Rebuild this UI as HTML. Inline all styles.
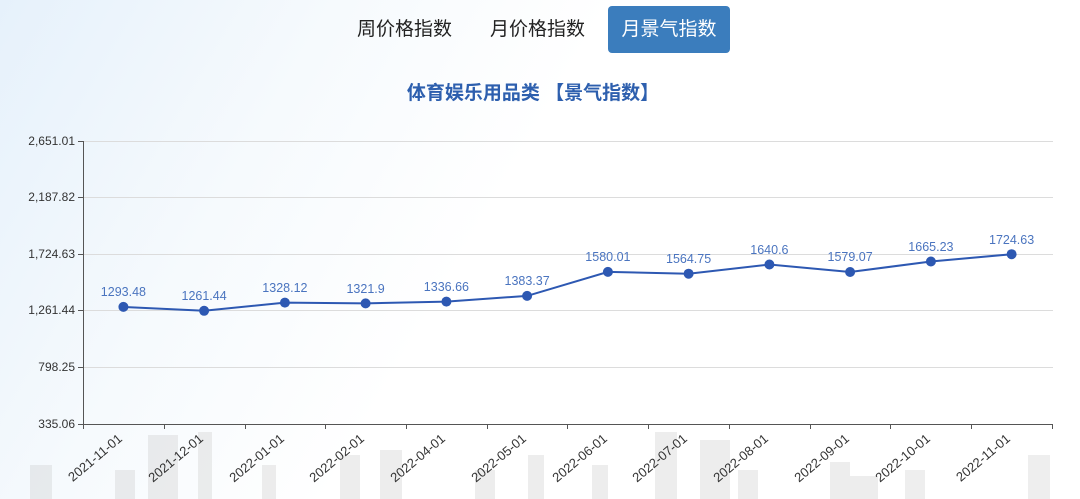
<!DOCTYPE html>
<html><head><meta charset="utf-8"><style>
html,body{margin:0;padding:0}
body{width:1080px;height:499px;overflow:hidden;position:relative;font-family:"Liberation Sans","Noto Sans CJK SC",sans-serif;background:linear-gradient(120deg,#e6f1fb 0%,#f6fafd 25%,#fff 45%,#fff 100%)}
.tab{position:absolute;top:6px;height:47px;line-height:47px;font-size:19px;color:#222}
.act{background:#3b7dbd;color:#fff;border-radius:4px;width:122px;text-align:center}
.title{position:absolute;top:78px;left:0;width:1066px;text-align:center;color:#2d5fae;font-weight:bold;font-size:19px}
</style></head><body>
<svg width="1080" height="499" style="position:absolute;left:0;top:0">
<g fill="#bbb" opacity="0.25">
<rect x="30" y="465" width="22" height="34"/><rect x="115" y="470" width="20" height="29"/><rect x="148" y="435" width="30" height="64"/><rect x="198" y="432" width="14" height="67"/><rect x="262" y="465" width="14" height="34"/><rect x="340" y="455" width="20" height="44"/><rect x="380" y="450" width="22" height="49"/><rect x="475" y="470" width="20" height="29"/><rect x="528" y="455" width="16" height="44"/><rect x="592" y="465" width="16" height="34"/><rect x="655" y="432" width="22" height="67"/><rect x="700" y="440" width="30" height="59"/><rect x="738" y="470" width="20" height="29"/><rect x="830" y="462" width="20" height="37"/><rect x="848" y="476" width="30" height="23"/><rect x="905" y="470" width="20" height="29"/><rect x="1028" y="455" width="22" height="44"/>
</g>
<g stroke="#dcdcdc" stroke-width="1">
<line x1="83" y1="141.5" x2="1053" y2="141.5"/><line x1="83" y1="197.5" x2="1053" y2="197.5"/><line x1="83" y1="254.5" x2="1053" y2="254.5"/><line x1="83" y1="310.5" x2="1053" y2="310.5"/><line x1="83" y1="367.5" x2="1053" y2="367.5"/>
</g>
<g stroke="#555" stroke-width="1">
<line x1="83.5" y1="141" x2="83.5" y2="424"/><line x1="78" y1="141.5" x2="83" y2="141.5"/><line x1="78" y1="197.5" x2="83" y2="197.5"/><line x1="78" y1="254.5" x2="83" y2="254.5"/><line x1="78" y1="310.5" x2="83" y2="310.5"/><line x1="78" y1="367.5" x2="83" y2="367.5"/><line x1="78" y1="424.5" x2="1053" y2="424.5"/>
<path d="M83.5 424v5M164.5 424v5M245.5 424v5M325.5 424v5M406.5 424v5M487.5 424v5M567.5 424v5M648.5 424v5M729.5 424v5M810.5 424v5M890.5 424v5M971.5 424v5M1052.5 424v5"/>
</g>
<g font-size="12" fill="#333" text-anchor="end">
<text x="75" y="145">2,651.01</text><text x="75" y="201">2,187.82</text><text x="75" y="258">1,724.63</text><text x="75" y="314">1,261.44</text><text x="75" y="371">798.25</text><text x="75" y="428">335.06</text>
</g>
<g font-size="13" fill="#333" text-anchor="end">
<text transform="translate(123,440) rotate(-40)">2021-11-01</text>
<text transform="translate(204,440) rotate(-40)">2021-12-01</text>
<text transform="translate(285,440) rotate(-40)">2022-01-01</text>
<text transform="translate(365,440) rotate(-40)">2022-02-01</text>
<text transform="translate(446,440) rotate(-40)">2022-04-01</text>
<text transform="translate(527,440) rotate(-40)">2022-05-01</text>
<text transform="translate(608,440) rotate(-40)">2022-06-01</text>
<text transform="translate(688,440) rotate(-40)">2022-07-01</text>
<text transform="translate(769,440) rotate(-40)">2022-08-01</text>
<text transform="translate(850,440) rotate(-40)">2022-09-01</text>
<text transform="translate(931,440) rotate(-40)">2022-10-01</text>
<text transform="translate(1011,440) rotate(-40)">2022-11-01</text>
</g>
<polyline fill="none" stroke="#2d58b2" stroke-width="2" points="123.4,306.9 204.1,310.8 284.9,302.6 365.6,303.4 446.4,301.6 527.1,295.9 607.9,271.9 688.6,273.7 769.4,264.5 850.1,272 930.9,261.5 1011.6,254.2"/>
<g fill="#2d58b2">
<circle cx="123.4" cy="306.9" r="5"/><circle cx="204.1" cy="310.8" r="5"/><circle cx="284.9" cy="302.6" r="5"/><circle cx="365.6" cy="303.4" r="5"/><circle cx="446.4" cy="301.6" r="5"/><circle cx="527.1" cy="295.9" r="5"/><circle cx="607.9" cy="271.9" r="5"/><circle cx="688.6" cy="273.7" r="5"/><circle cx="769.4" cy="264.5" r="5"/><circle cx="850.1" cy="272" r="5"/><circle cx="930.9" cy="261.5" r="5"/><circle cx="1011.6" cy="254.2" r="5"/>
</g>
<g font-size="12.5" fill="#4a74bf" text-anchor="middle">
<text x="123.4" y="296">1293.48</text><text x="204.1" y="300">1261.44</text><text x="284.9" y="292">1328.12</text><text x="365.6" y="293">1321.9</text><text x="446.4" y="291">1336.66</text><text x="527.1" y="285">1383.37</text><text x="607.9" y="261">1580.01</text><text x="688.6" y="263">1564.75</text><text x="769.4" y="254">1640.6</text><text x="850.1" y="261">1579.07</text><text x="930.9" y="251">1665.23</text><text x="1011.6" y="244">1724.63</text>
</g>
</svg>
<div class="tab" style="left:357px">周价格指数</div>
<div class="tab" style="left:490px">月价格指数</div>
<div class="tab act" style="left:608px">月景气指数</div>
<div class="title">体育娱乐用品类 【景气指数】</div>
</body></html>
